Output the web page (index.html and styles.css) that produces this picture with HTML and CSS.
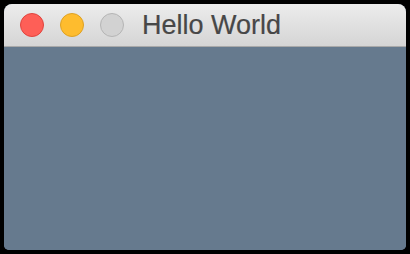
FILE: index.html
```html
<!DOCTYPE html>
<html>
<head>
<meta charset="utf-8">
<link rel="stylesheet" href="styles.css">
</head>
<body>
<div class="window">
  <div class="titlebar">
    <span class="dot dot-close"></span>
    <span class="dot dot-min"></span>
    <span class="dot dot-max"></span>
    <span class="title">Hello World</span>
  </div>
  <div class="content"></div>
</div>
</body>
</html>
```
FILE: styles.css
```css
html, body {
  margin: 0;
  padding: 0;
  background: #000;
}
body {
  padding: 4px;
  width: 402px;
  height: 246px;
}
.window {
  width: 402px;
  height: 246px;
  border-radius: 8px 8px 5px 5px;
  overflow: hidden;
  display: flex;
  flex-direction: column;
  background: #667a8e;
}
.titlebar {
  height: 42px;
  flex: none;
  display: flex;
  align-items: center;
  padding-left: 16px;
  gap: 16px;
  background: linear-gradient(#ececec, #d5d5d5);
  border-bottom: 1px solid #a9a9a9;
}
.dot {
  width: 24px;
  height: 24px;
  border-radius: 50%;
  box-sizing: border-box;
  flex: none;
}
.dot-close {
  background: #fe5f57;
  border: 1px solid #e0443e;
}
.dot-min {
  background: #febc2e;
  border: 1px solid #dea123;
}
.dot-max {
  background: #d2d2d2;
  border: 1px solid #b5b5b5;
}
.title {
  margin-left: 2px;
  font-family: "Liberation Sans", Arial, sans-serif;
  font-size: 27px;
  color: #474747;
  line-height: 1;
  padding-top: 1px;
  -webkit-text-stroke: 0.2px #474747;
}
.content {
  flex: 1;
  background: #667a8e;
}
```
